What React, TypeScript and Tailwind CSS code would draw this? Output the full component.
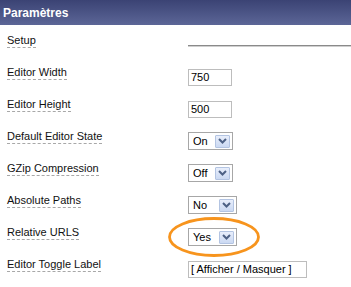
import React from 'react';

const font = { fontFamily: '"Liberation Sans", Arial, sans-serif' };

interface RowProps {
    label: string;
    children: React.ReactNode;
}

const Row: React.FC<RowProps> = ({ label, children }) => (
    <div className="flex h-[32px] items-start">
        <div className="w-[188px] shrink-0 pl-[7px] pt-[8px]">
            <div className="w-fit border-b border-dashed border-[#a8a8a8] text-[11px] leading-[13px] text-[#111]">
                {label}
            </div>
        </div>
        <div className="flex-1">{children}</div>
    </div>
);

const TextBox: React.FC<{ value: string; width: string }> = ({ value, width }) => (
    <div className={`mt-[11px] flex h-[17px] items-center border border-[#bdbdbd] bg-white pl-[2px] text-[11px] leading-none text-black ${width}`}>
        {value}
    </div>
);

const Select: React.FC<{ value: string; width: string }> = ({ value, width }) => (
    <div className={`mt-[10px] flex h-[18px] items-center justify-between border border-[#a7a7a7] bg-white pl-[4px] pr-[2px] text-[11px] leading-none text-black ${width}`}>
        <span>{value}</span>
        <span className="flex h-[13px] w-[15px] items-center justify-center rounded-[1px] border border-[#b3c4e2] bg-gradient-to-b from-[#e8eefb] to-[#cbd9f2]">
            <svg width="9" height="6" viewBox="0 0 9 6">
                <path d="M1 1 L4.5 4.5 L8 1" fill="none" stroke="#4d6185" strokeWidth="2" />
            </svg>
        </span>
    </div>
);

export default function App() {
    return (
        <div className="h-[287px] w-[351px] overflow-hidden bg-white leading-none" style={font}>
            <div className="flex h-[25px] items-center bg-gradient-to-b from-[#3b4374] to-[#5c6697] pl-[3px] text-[12px] font-bold text-white">
                Paramètres
            </div>
            <div className="pt-[1px]">
                <Row label="Setup">
                    <div className="mt-[19px] h-[2px] border-t border-b border-t-[#8a8a8a] border-b-[#cfcfcf]" />
                </Row>
                <Row label="Editor Width">
                    <TextBox value="750" width="w-[44px]" />
                </Row>
                <Row label="Editor Height">
                    <TextBox value="500" width="w-[44px]" />
                </Row>
                <Row label="Default Editor State">
                    <Select value="On" width="w-[45px]" />
                </Row>
                <Row label="GZip Compression">
                    <Select value="Off" width="w-[45px]" />
                </Row>
                <Row label="Absolute Paths">
                    <Select value="No" width="w-[49px]" />
                </Row>
                <Row label="Relative URLS">
                    <div className="relative flex w-[49px] flex-col">
                        <Select value="Yes" width="w-[49px]" />
                        <svg className="absolute left-[-20px] top-[-1px]" width="92" height="40" viewBox="0 0 92 40">
                            <ellipse cx="46" cy="20" rx="44.5" ry="18.5" fill="none" stroke="#f7941d" strokeWidth="2.8" />
                        </svg>
                    </div>
                </Row>
                <Row label="Editor Toggle Label">
                    <TextBox value="[ Afficher / Masquer ]" width="w-[119px]" />
                </Row>
            </div>
        </div>
    );
}
